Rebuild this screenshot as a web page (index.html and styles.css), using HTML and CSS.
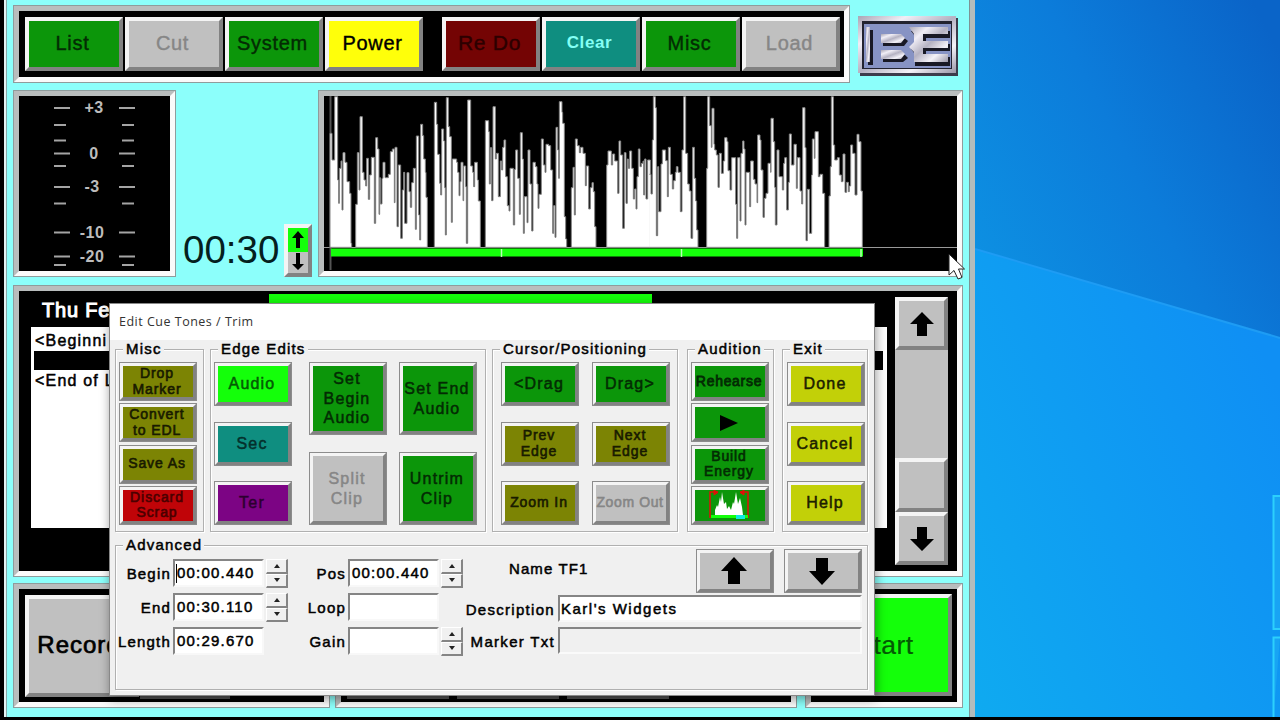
FILE: index.html
```html
<!DOCTYPE html>
<html lang="en">
<head>
    <meta charset="UTF-8">
    <title>Edit Cue Tones / Trim</title>
    <link rel="stylesheet" href="styles.css">
</head>
<body>
    <svg class="wallpaper" viewBox="975 0 305 717" width="305" height="717">
        <defs>
            <linearGradient id="skyTop" x1="0" y1="0.75" x2="1" y2="0.15">
                <stop offset="0" stop-color="#0d90e2"/>
                <stop offset="0.5" stop-color="#0c7cda"/>
                <stop offset="1" stop-color="#0a64c8"/>
            </linearGradient>
            <linearGradient id="skyLow" x1="0" y1="1" x2="1" y2="0.3">
                <stop offset="0" stop-color="#0faaf0"/>
                <stop offset="1" stop-color="#0f8ff4"/>
            </linearGradient>
        </defs>
        <rect x="975" width="305" height="350" fill="url(#skyTop)"/>
        <path d="M975 249L1280 338V717H975Z" fill="url(#skyLow)"/>
        <path d="M975 249L1280 338" stroke="#1e9cf4" stroke-width="2"/>
        <path d="M1280 496H1273.500V629H1280M1280 637.500H1273.500V717" fill="#18a4f4" stroke="#2cd0fc" stroke-width="2"/>
    </svg>

    <div class="app">
        <div class="row row-top">
            <div class="frame toolbar">
                <button class="btn tool green">List</button>
                <button class="btn tool off">Cut</button>
                <button class="btn tool green">System</button>
                <button class="btn tool yellow">Power</button>
                <button class="btn tool maroon">Re Do</button>
                <button class="btn tool teal lit">Clear</button>
                <button class="btn tool green">Misc</button>
                <button class="btn tool off">Load</button>
            </div>
            <svg class="logo" viewBox="0 0 100 60" width="100" height="60">
                <defs>
                    <linearGradient id="steel" x1="0" y1="0" x2="1" y2="1">
                        <stop offset="0" stop-color="#a9a5b4"/>
                        <stop offset="0.25" stop-color="#f1eef6"/>
                        <stop offset="0.5" stop-color="#b5b2c2"/>
                        <stop offset="0.75" stop-color="#f4f2f8"/>
                        <stop offset="1" stop-color="#9a97a8"/>
                    </linearGradient>
                </defs>
                <rect x="2" y="2" width="98" height="58" fill="#3c3c4c"/>
                <rect width="98" height="57" fill="url(#steel)"/>
                <rect x="4" y="5" width="90" height="48" fill="#23232f"/>
                <rect x="6" y="8" width="87" height="44" fill="#8793c4"/>
                <!-- shadows -->
                <path d="M10 14H15V49H10ZM25 21H45L50 25L46 30H25ZM25 38H46L50 42L45 46H25ZM53 15H92V22H68V28H92V35H68V41H92V50H57V38L53 33L57 28V20Z" fill="#191925"/>
                <g fill="url(#steel)">
                    <path d="M8 11H12V46H8Z"/>
                    <path d="M23 18H43L47 22L43 27H23Z"/>
                    <path d="M23 34H43L47 38L43 43H23Z"/>
                    <path d="M51 11H90V18H65V25H90V32H65V38H90V46H56V36L51 31L56 26V18Z"/>
                </g>
            </svg>
        </div>

        <div class="row row-mid">
            <div class="frame meter">
                <svg viewBox="19 96 151 175" width="151" height="175">
                    <path class="marks" d="M54 108H70M54 153.500H70M54 187H70M54 232.500H70M54 256.500H70M119 108H135M119 153.500H135M119 187H135M119 232.500H135M119 256.500H135"/>
                    <path class="marks" d="M54 125H66M54 140.500H66M54 166H66M54 203.500H66M54 265H66M122 125H134M122 140.500H134M122 166H134M122 203.500H134M122 265H134"/>
                    <g class="levels">
                        <text x="94" y="113">+3</text>
                        <text x="94" y="159">0</text>
                        <text x="92" y="192">-3</text>
                        <text x="92" y="238">-10</text>
                        <text x="92" y="262">-20</text>
                    </g>
                </svg>
            </div>
            <div class="clock">00:30</div>
            <div class="btn updown">
                <div class="half on"><svg viewBox="0 0 20 23" width="20" height="23"><path d="M10 3L16 10H12V20H8V10H4Z"/></svg></div>
                <div class="half"><svg viewBox="0 0 20 21" width="20" height="21"><path d="M10 18L16 12H12V1H8V12H4Z"/></svg></div>
            </div>
            <div class="frame wave">
                <svg viewBox="324 96 633 175" width="633" height="175">
                    <path d="M324 247.500H957" stroke="#999"/>
                    <path d="M330.500 96V270" stroke="#555" stroke-width="2"/>
                    <!-- energy, first half -->
                    <path class="energy" transform="translate(310 85) scale(.33333)" d="M60 487V145H66V225H74V35H83V285H86V355H88V250H93V228H96V375H99V203H105V232H111V290H119V325H123V475H125V487Z
                        M137 487V358H142V203H147V315H150V95H157V262H162V285H167V303H170V220H175V343H179V270H184V217H193V415H197V158H203V192H207V388H209V278H211V357H216V280H219V232H225V278H235V268H241V200H247V192H253V353H255V187H261V425H265V240H272V460H277V315H281V262H284V415H291V263H297V320H301V367H305V293H310V250H316V433H319V153H326V390H329V465H332V118H338V152H341V222H346V262H348V337H352V487Z
                        M373 487V52H380V118H383V208H389V295H392V330H395V132H401V168H404V308H406V450H409V38H415V125H419V155H424V412H427V222H440V232H443V262H447V332H450V290H453V232H459V347H461V243H467V305H469V475H473V45H482V243H488V262H491V305H494V232H502V285H505V348H511V487Z
                        M526 487V107H536V140H538V297H541V188H545V347H549V65H556V222H559V205H565V335H571V228H575V255H578V187H582V165H587V275H592V362H597V378H600V250H610V420H614V253H617V195H623V280H628V388H631V143H637V222H640V445H643V335H651V413H654V195H660V297H665V438H669V232H676V245H681V297H684V370H687V328H694V162H700V240H705V262H708V178H716V182H722V255H728V445H731V362H735V457H738V127H743V195H746V280H748V50H756V82H758V115H763V395H767V462H770V487Z
                        M784 487V308H789V247H793V390H796V162H802V182H808V203H812V187H819V205H826V302H829V243H836V372H841V308H846V293H850V320H854V425H858V487Z
                        M890 487V240H894V198H904V240H908V207H914V228H923V325H927V168H932V210H938V430H943V203H948V355H952V222H955V250H959V198H965V250H970V342H974V312H978V372H981V275H985V192H990V245H994V235H999V228H1001V330H1004V222H1008V342H1013V225H1021V487Z"/>
                    <!-- energy, second half -->
                    <path class="energy" transform="translate(640 85) scale(.33333)" d="M28 268H33V327H37V165H40V35H46V68H49V452H53V245H56V380H63V237H67V195H77V227H82V335H85V187H91V268H97V312H101V287H106V262H109V245H114V262H121V380H126V195H131V35H137V205H143V297H148V318H153V460H158V187H163V280H167V348H170V435H174V487H28
                        M200 487V250H203V35H209V122H214V187H216V70H222V178H224V195H229V210H234V307H238V205H244V265H250V228H254V158H261V170H264V257H270V315H275V218H287V358H290V460H293V218H300V408H303V205H308V168H312V192H315V420H318V262H329V365H332V228H340V283H345V297H351V353H353V150H360V165H363V255H369V397H373V340H378V325H384V235H392V262H393V100H400V170H404V307H406V420H411V195H417V275H427V315H431V235H434V218H440V375H445V292H448V147H454V240H462V178H469V310H472V218H480V318H485V357H488V68H495V188H498V467H502V313H508V445H515V270H517V162H523V220H525V140H535V275H540V268H548V325H554V487Z
                        M567 487V333H571V245H574V35H580V180H584V225H592V218H598V270H604V290H609V207H615V322H620V292H625V320H628V303H632V180H638V205H645V330H651V148H657V170H663V318H667V487Z"/>
                    <rect x="331" y="248.500" width="532" height="8" fill="#14ff0a"/>
                    <path d="M501.500 249V257M681.500 249V257M861 249V257" stroke="#b8ffb4" stroke-width="1.500"/>
                </svg>
            </div>
        </div>

        <div class="frame list">
            <div class="list-main">
                <div class="list-head">
                    <span class="list-date">Thu Fe</span>
                    <span class="list-bar"></span>
                </div>
                <div class="list-rows">
                    <div class="item">&lt;Beginni</div>
                    <div class="item selected"></div>
                    <div class="item">&lt;End of L</div>
                </div>
            </div>
            <div class="scroll">
                <div class="btn scroll-btn"><svg viewBox="0 0 24 24" width="24" height="24"><path d="M12 0L24 12H17V24H7V12H0Z"/></svg></div>
                <div class="scroll-track"></div>
                <div class="btn scroll-thumb"></div>
                <div class="btn scroll-btn"><svg viewBox="0 0 24 24" width="24" height="24"><path d="M12 24L24 12H17V0H7V12H0Z"/></svg></div>
            </div>
        </div>

        <div class="row row-bottom">
            <div class="frame deck deck-left">
                <button class="btn big">Record</button>
                <div class="edge"></div>
            </div>
            <div class="frame deck deck-mid">
                <div class="edge"></div>
                <div class="edge"></div>
                <div class="edge"></div>
            </div>
            <div class="frame deck deck-right">
                <button class="btn big lime">Start</button>
            </div>
        </div>
    </div>

    <div class="dialog">
        <div class="dialog-title">Edit Cue Tones / Trim</div>
        <div class="groups">
            <div class="group misc">
                <span class="legend">Misc</span>
                <div class="stack tight">
                    <button class="btn key olive small">Drop<br>Marker</button>
                    <button class="btn key olive small">Convert<br>to EDL</button>
                    <button class="btn key olive small">Save As</button>
                    <button class="btn key red small">Discard<br>Scrap</button>
                </div>
            </div>
            <div class="group edits">
                <span class="legend">Edge Edits</span>
                <div class="stack">
                    <button class="btn key lime">Audio</button>
                    <button class="btn key teal">Sec</button>
                    <button class="btn key purple">Ter</button>
                </div>
                <div class="stack tall">
                    <button class="btn key green">Set<br>Begin<br>Audio</button>
                    <button class="btn key off">Split<br>Clip</button>
                </div>
                <div class="stack tall">
                    <button class="btn key green">Set End<br>Audio</button>
                    <button class="btn key green">Untrim<br>Clip</button>
                </div>
            </div>
            <div class="group cursor">
                <span class="legend">Cursor/Positioning</span>
                <div class="stack">
                    <button class="btn key green">&lt;Drag</button>
                    <button class="btn key olive small">Prev<br>Edge</button>
                    <button class="btn key olive small">Zoom In</button>
                </div>
                <div class="stack">
                    <button class="btn key green">Drag&gt;</button>
                    <button class="btn key olive small">Next<br>Edge</button>
                    <button class="btn key off small">Zoom Out</button>
                </div>
            </div>
            <div class="group audition">
                <span class="legend">Audition</span>
                <div class="stack tight">
                    <button class="btn key green small heavy">Rehearse</button>
                    <button class="btn key green"><svg viewBox="0 0 18 16" width="18" height="16"><path d="M0 0L18 8L0 16Z"/></svg></button>
                    <button class="btn key green small">Build<br>Energy</button>
                    <button class="btn key green">
                        <svg viewBox="0 0 42 30" width="42" height="30">
                            <path d="M2 28V2H10M40 28V2H32" fill="none" stroke="#e01008" stroke-width="1.500"/>
                            <path d="M6 0L10 2.500L6 5ZM36 0L32 2.500L36 5Z" fill="#e01008" stroke="#e01008"/>
                            <path d="M7 25V20L9 15L10 17L12 7L13 12L14 2L16 14L18 12L19 19L21 16L23 20L25 12L26 14L28 2L30 14L32 8L34 17L35 25Z" fill="#fff"/>
                            <path d="M3 25H40V28H3Z" fill="#14ff0a"/>
                            <path d="M28 25H37V29H28Z" fill="#10e8e0"/>
                        </svg>
                    </button>
                </div>
            </div>
            <div class="group exit">
                <span class="legend">Exit</span>
                <div class="stack">
                    <button class="btn key citron">Done</button>
                    <button class="btn key citron">Cancel</button>
                    <button class="btn key citron">Help</button>
                </div>
            </div>
        </div>

        <div class="group advanced">
            <span class="legend">Advanced</span>
            <div class="times">
                <label>Begin</label><div class="field"><i class="caret"></i>00:00.440</div><div class="spin"><b></b><b></b></div>
                <label>End</label><div class="field">00:30.110</div><div class="spin"><b></b><b></b></div>
                <label>Length</label><div class="field">00:29.670</div>
            </div>
            <div class="times second">
                <label>Pos</label><div class="field">00:00.440</div><div class="spin"><b></b><b></b></div>
                <label>Loop</label><div class="field"></div><div></div>
                <label>Gain</label><div class="field"></div><div class="spin"><b></b><b></b></div>
            </div>
            <div class="details">
                <div class="name-row">
                    <span class="name">Name TF1</span>
                    <div class="btn key move"><svg viewBox="0 0 28 28" width="28" height="28"><path d="M14 0L27 14H20V27H8V14H1Z"/></svg></div>
                    <div class="btn key move"><svg viewBox="0 0 28 28" width="28" height="28"><path d="M14 28L27 14H20V1H8V14H1Z"/></svg></div>
                </div>
                <div class="text-row"><label>Description</label><div class="field">Karl's Widgets</div></div>
                <div class="text-row marker"><label>Marker Txt</label><div class="field readonly"></div></div>
            </div>
        </div>
    </div>

    <svg class="pointer" viewBox="0 0 18 28" width="18" height="28"><path d="M1 1V22L6 17.500L10 26L14 24.500L10.500 16H16.500Z" fill="#fff" stroke="#222"/></svg>
</body>
</html>
```
FILE: styles.css
```css
* {
    box-sizing: border-box;
}
body {
    margin: 0;
    width: 1280px;
    height: 720px;
    overflow: hidden;
    background: #000;
    font-family: "Liberation Sans", Arial, sans-serif;
    color: #000;
    position: relative;
}
svg {
    display: block;
    flex: none;
}
.wallpaper {
    position: absolute;
    left: 975px;
    top: 0;
}

/* Main window */
.app {
    width: 971px;
    height: 717px;
    margin-left: 4px;
    padding: 5px 7px 9px;
    background: #8cfffb;
    border-left: 2px solid #e4f4f4;
    border-right: 5px solid #b4bcbc;
    box-shadow: inset -1px 0 #7c9494, inset 1px 0 #8aa;
    display: flex;
    flex-direction: column;
}
.row {
    display: flex;
}
.frame {
    border: 6px solid;
    border-color: #b9bdbd #fafafa #fafafa #b9bdbd;
    outline: 1px solid #8f9c9c;
    outline-offset: -1px;
    background: #000;
    display: flex;
}

/* Raised buttons */
.btn {
    margin: 0;
    padding: 0;
    border: 4px solid;
    border-color: #f4f4f4 #828282 #828282 #f4f4f4;
    border-radius: 0;
    background: #c0c0c0;
    font-family: inherit;
    color: #000;
    display: flex;
    flex: none;
    align-items: center;
    justify-content: center;
    text-align: center;
    white-space: nowrap;
}
.green {
    background: #0c960a;
    color: #032b03;
}
.off {
    background: #c0c0c0;
    color: #868686;
}
.yellow {
    background: #ffff0a;
}
.maroon {
    background: #740404;
    color: #2c0000;
}
.teal {
    background: #0f8e80;
    color: #04302c;
}
.lime {
    background: #14ff0a;
    color: #045a04;
}
.olive {
    background: #7c8404;
    color: #181a00;
}
.red {
    background: #c00408;
    color: #4a0000;
}
.purple {
    background: #7c0484;
    color: #2c0030;
}
.citron {
    background: #c2d008;
    color: #1c2000;
}

/* Toolbar */
.row-top {
    height: 78px;
    margin-bottom: 7px;
}
.toolbar {
    width: 837px;
    padding: 6px 0 6px 6px;
    gap: 2px;
}
.tool {
    width: 98px;
    height: 54px;
    padding: 0 3px 2px 0;
    font-size: 20px;
    letter-spacing: 0.7px;
    -webkit-text-stroke: 0.4px;
}
.tool.maroon {
    margin-left: 17px;
    font-size: 21px;
}
.tool.lit {
    color: #84fff4;
    font-size: 17px;
    font-weight: bold;
    letter-spacing: 0.6px;
    -webkit-text-stroke: 0;
}
.logo {
    margin: 11px 0 0 8px;
}

/* Meter, clock and waveform */
.row-mid {
    height: 187px;
    margin-bottom: 8px;
}
.meter {
    width: 163px;
}
.marks {
    stroke: #a4a4a4;
    stroke-width: 2;
}
.levels {
    fill: #bcbcbc;
    font-size: 16px;
    font-weight: bold;
    text-anchor: middle;
    letter-spacing: 0.5px;
}
.clock {
    width: 108px;
    padding: 138px 0 0 7px;
    font-size: 38.5px;
    line-height: 44px;
    color: #04201e;
}
.updown {
    width: 28px;
    height: 53px;
    margin-top: 134px;
    flex-direction: column;
}
.half {
    width: 20px;
    height: 21px;
}
.half.on {
    height: 24px;
    background: #14ff0a;
}
.wave {
    width: 645px;
    margin-left: 6px;
}
.energy {
    fill: #fff;
    stroke: #848484;
    stroke-width: 3;
}

/* Cut list */
.list {
    height: 292px;
    margin-bottom: 6px;
}
.list-main {
    width: 868px;
    padding: 3px 0 0 12px;
}
.list-head {
    display: flex;
    height: 33px;
    color: #fff;
}
.list-date {
    width: 238px;
    padding: 5px 0 0 11px;
    font-size: 20px;
    line-height: 22px;
    letter-spacing: 0.8px;
    -webkit-text-stroke: 1px;
}
.list-bar {
    width: 383px;
    background: #14ff0a;
}
.list-rows {
    height: 201px;
    padding: 4px 4px 0 3px;
    background: #fff;
}
.item {
    height: 19px;
    margin-bottom: 1px;
    padding-left: 1px;
    font-size: 16px;
    line-height: 20px;
    letter-spacing: 1.2px;
    -webkit-text-stroke: 0.5px;
}
.item.selected {
    background: #000;
}
.scroll {
    width: 53px;
    height: 268px;
    margin: 6px 0 0 8px;
    display: flex;
    flex-direction: column;
}
.scroll-btn {
    height: 53px;
}
.scroll-track {
    flex: 1;
    background: #c0c0c0;
}
.scroll-thumb {
    height: 54px;
}

/* Transport */
.row-bottom {
    height: 125px;
}
.deck {
    height: 125px;
    padding: 6px;
}
.deck-left {
    width: 317px;
    margin-right: 5px;
}
.deck-mid {
    width: 462px;
    margin-right: 8px;
    gap: 8px;
}
.deck-right {
    width: 158px;
}
.big {
    width: 114px;
    height: 102px;
    padding: 0 6px 2px 0;
    font-size: 24px;
    letter-spacing: 1px;
    -webkit-text-stroke: 0.7px;
}
.big.lime {
    width: 135px;
    margin-top: -1px;
    padding: 0;
    font-size: 26.5px;
    letter-spacing: 0.5px;
    -webkit-text-stroke: 0.2px;
}
.edge {
    width: 102px;
    height: 104px;
    border-bottom: 3px solid #505050;
}
.deck-left .edge {
    width: 90px;
    margin-left: 1px;
}

/* Dialog */
.dialog {
    position: absolute;
    left: 109px;
    top: 303px;
    width: 766px;
    height: 393px;
    background: #f0f0f0;
    border: 1px solid #888;
    box-shadow: 1px 3px 10px rgba(0,0,0,0.4);
    -webkit-text-stroke: 0.5px;
}
.dialog-title {
    height: 36px;
    padding-left: 9px;
    background: #fff;
    color: #333;
    font-family: "Open Sans", sans-serif;
    font-size: 12.5px;
    line-height: 35px;
    letter-spacing: 0.5px;
    -webkit-text-stroke: 0;
}
.groups {
    display: flex;
    padding: 9px 0 0 5px;
}
.group {
    position: relative;
    height: 183px;
    border: 1px solid #b0b0b0;
    box-shadow: inset 1px 1px #fff, 1px 1px #fff;
    display: flex;
}
.legend {
    position: absolute;
    top: -10px;
    left: 7px;
    padding: 0 2px 0 3px;
    background: #f0f0f0;
    font-size: 15px;
    line-height: 18px;
    letter-spacing: 1.2px;
    white-space: nowrap;
}
.misc {
    width: 89px;
    padding: 12px 0 0 3px;
    margin-right: 6px;
}
.edits {
    width: 276px;
    padding: 12px 0 0 3px;
    margin-right: 6px;
}
.cursor {
    width: 186px;
    padding: 12px 0 0 8px;
    margin-right: 9px;
    gap: 13px;
}
.audition {
    width: 87px;
    padding: 12px 0 0 3px;
    margin-right: 8px;
}
.exit {
    width: 86px;
    padding: 12px 0 0 4px;
}
.stack {
    width: 78px;
    height: 163px;
    display: flex;
    flex-direction: column;
    justify-content: space-between;
}
.edits .tall {
    margin-left: 17px;
}
.edits .tall + .tall {
    margin-left: 12px;
}
.key {
    width: 78px;
    height: 44px;
    padding-right: 2px;
    outline: 1px solid #8c8c8c;
    outline-offset: -1px;
    font-size: 16px;
    line-height: 19.5px;
    letter-spacing: 1.2px;
    -webkit-text-stroke: 0.5px;
}
.tight .key {
    height: 39px;
}
.tall .key {
    height: 73px;
}
.key.small {
    font-size: 14px;
    line-height: 15.5px;
    letter-spacing: 0.9px;
    -webkit-text-stroke: 0.6px;
}
.key.heavy {
    letter-spacing: 0.7px;
    -webkit-text-stroke: 0.8px;
}
.key.small.off {
    letter-spacing: 0.6px;
}

/* Advanced block */
.advanced {
    width: 753px;
    height: 145px;
    margin: 13px 0 0 5px;
    font-size: 15px;
    letter-spacing: 1.2px;
}
.times {
    display: grid;
    grid-template-columns: 54px 91px 22px;
    grid-auto-rows: 29px;
    column-gap: 2px;
    row-gap: 5px;
    align-content: start;
    padding: 13px 0 0 1px;
}
.times.second {
    grid-template-columns: 52px 91px 22px;
    margin-left: 5px;
}
label {
    display: flex;
    justify-content: flex-end;
    line-height: 30px;
    letter-spacing: 1.2px;
    white-space: nowrap;
}
.field {
    position: relative;
    height: 28px;
    padding-left: 2px;
    border: 2px solid;
    border-color: #858585 #f8f8f8 #f8f8f8 #858585;
    background: #fff;
    line-height: 24px;
    white-space: nowrap;
}
.caret {
    position: absolute;
    left: 1px;
    top: 3px;
    width: 1px;
    height: 19px;
    background: #000;
}
.spin {
    height: 29px;
    display: flex;
    flex-direction: column;
}
.spin b {
    flex: 1;
    border: 1px solid;
    border-color: #fff #858585 #858585 #fff;
    border-right-width: 2px;
    border-bottom-width: 2px;
    display: flex;
    align-items: center;
    justify-content: center;
}
.spin b::before {
    content: "";
    border: 3px solid transparent;
    border-top: 0;
    border-bottom: 4px solid #222;
}
.spin b + b::before {
    border-bottom: 0;
    border-top: 4px solid #222;
}
.details {
    width: 397px;
    margin-left: 2px;
}
.name-row {
    display: flex;
    height: 49px;
    padding: 3px 0 0 44px;
    gap: 10px;
}
.name {
    width: 177px;
    line-height: 40px;
    letter-spacing: 1.1px;
}
.text-row {
    display: flex;
    height: 32px;
    gap: 3px;
}
.text-row label {
    width: 90px;
    letter-spacing: 1.3px;
}
.text-row.marker label {
    letter-spacing: 1.3px;
}
.text-row .field {
    width: 304px;
    height: 27px;
    padding-left: 1px;
    letter-spacing: 1.5px;
}
.text-row .field.readonly {
    background: #f0f0f0;
    border-color: #858585 #fafafa #fafafa #858585;
}

.pointer {
    position: absolute;
    left: 948px;
    top: 253px;
}
```
